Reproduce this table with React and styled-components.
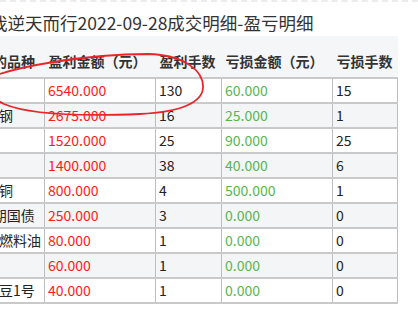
import React from "react";
import styled, { createGlobalStyle } from "styled-components";

const Global = createGlobalStyle`
  html, body { margin: 0; padding: 0; background: #fff; }
  body { overflow: hidden; font-family: "Noto Sans CJK SC", "Noto Sans", sans-serif; }
`;

const Page = styled.div`
  position: relative;
  width: 418px;
  height: 314px;
  overflow: hidden;
  border-top: 2px dashed #ececec;
  box-sizing: border-box;
  padding-top: 8px;
`;

const Title = styled.h1`
  margin: 0 0 0 -10px;
  font-size: 17.5px;
  line-height: 26px;
  font-weight: 400;
  color: #333;
  white-space: nowrap;
`;

const Table = styled.table`
  margin-left: -32px;
  border-collapse: collapse;
  table-layout: fixed;
  font-size: 14px;
  color: #222;
`;

const HeadCell = styled.th`
  background: #f5f6f8;
  text-align: left;
  font-weight: 700;
  color: #333;
  line-height: 20px;
  padding: 15px 4px 6px;
  white-space: nowrap;
  text-indent: ${(p) => p.$indent || 0}px;
  border-bottom: 2px solid #c9c9c9;
`;

const Row = styled.tr`
  background: ${(p) => (p.$alt ? "#f4f5f7" : "#fff")};
`;

const Cell = styled.td`
  line-height: 20px;
  padding: 1px 3px 2px;
  white-space: nowrap;
  overflow: hidden;
  color: ${(p) => p.$color || "#222"};
  border-left: 1px solid #bdbdbd;
  border-right: 1px solid #bdbdbd;
  border-bottom: 2px solid #c9c9c9;
  &:first-child { border-left: none; }
`;

const Ring = styled.svg`
  position: absolute;
  left: 0;
  top: 0;
  pointer-events: none;
  overflow: visible;
`;

const RED = "#ff1a1a";
const GREEN = "#55b84f";

const rows = [
  ["白银", "6540.000", "130", "60.000", "15"],
  ["螺纹钢", "2675.000", "16", "25.000", "1"],
  ["甲醇", "1520.000", "25", "90.000", "25"],
  ["纯碱", "1400.000", "38", "40.000", "6"],
  ["阴极铜", "800.000", "4", "500.000", "1"],
  ["5年期国债", "250.000", "3", "0.000", "0"],
  ["低硫燃料油", "80.000", "1", "0.000", "0"],
  ["玉米", "60.000", "1", "0.000", "0"],
  ["黄大豆1号", "40.000", "1", "0.000", "0"],
];

export default function App() {
  return (
    <>
      <Global />
      <Page>
        <Title>我逆天而行2022-09-28成交明细-盈亏明细</Title>
        <Table>
          <colgroup>
            <col style={{ width: 76 }} />
            <col style={{ width: 111 }} />
            <col style={{ width: 66 }} />
            <col style={{ width: 111 }} />
            <col style={{ width: 65 }} />
          </colgroup>
          <thead>
            <tr>
              <HeadCell $indent={-7}>交易的品种</HeadCell>
              <HeadCell>盈利金额（元）</HeadCell>
              <HeadCell>盈利手数</HeadCell>
              <HeadCell>亏损金额（元）</HeadCell>
              <HeadCell>亏损手数</HeadCell>
            </tr>
          </thead>
          <tbody>
            {rows.map((r, i) => (
              <Row key={i} $alt={i % 2 === 1}>
                <Cell>{r[0]}</Cell>
                <Cell $color={RED}>{r[1]}</Cell>
                <Cell>{r[2]}</Cell>
                <Cell $color={GREEN}>{r[3]}</Cell>
                <Cell>{r[4]}</Cell>
              </Row>
            ))}
          </tbody>
        </Table>
        <Ring width="418" height="314" viewBox="0 0 418 314">
          <path
            d="M -20 80 C 10 64, 90 52, 148 52 C 186 53, 204 70, 203 86 C 202 100, 182 110, 140 112 C 90 114, 32 114, 4 102 C -8 96, -14 90, -16 84"
            fill="none"
            stroke="#e8262a"
            strokeWidth="1.8"
            strokeLinecap="round"
          />
        </Ring>
      </Page>
    </>
  );
}
